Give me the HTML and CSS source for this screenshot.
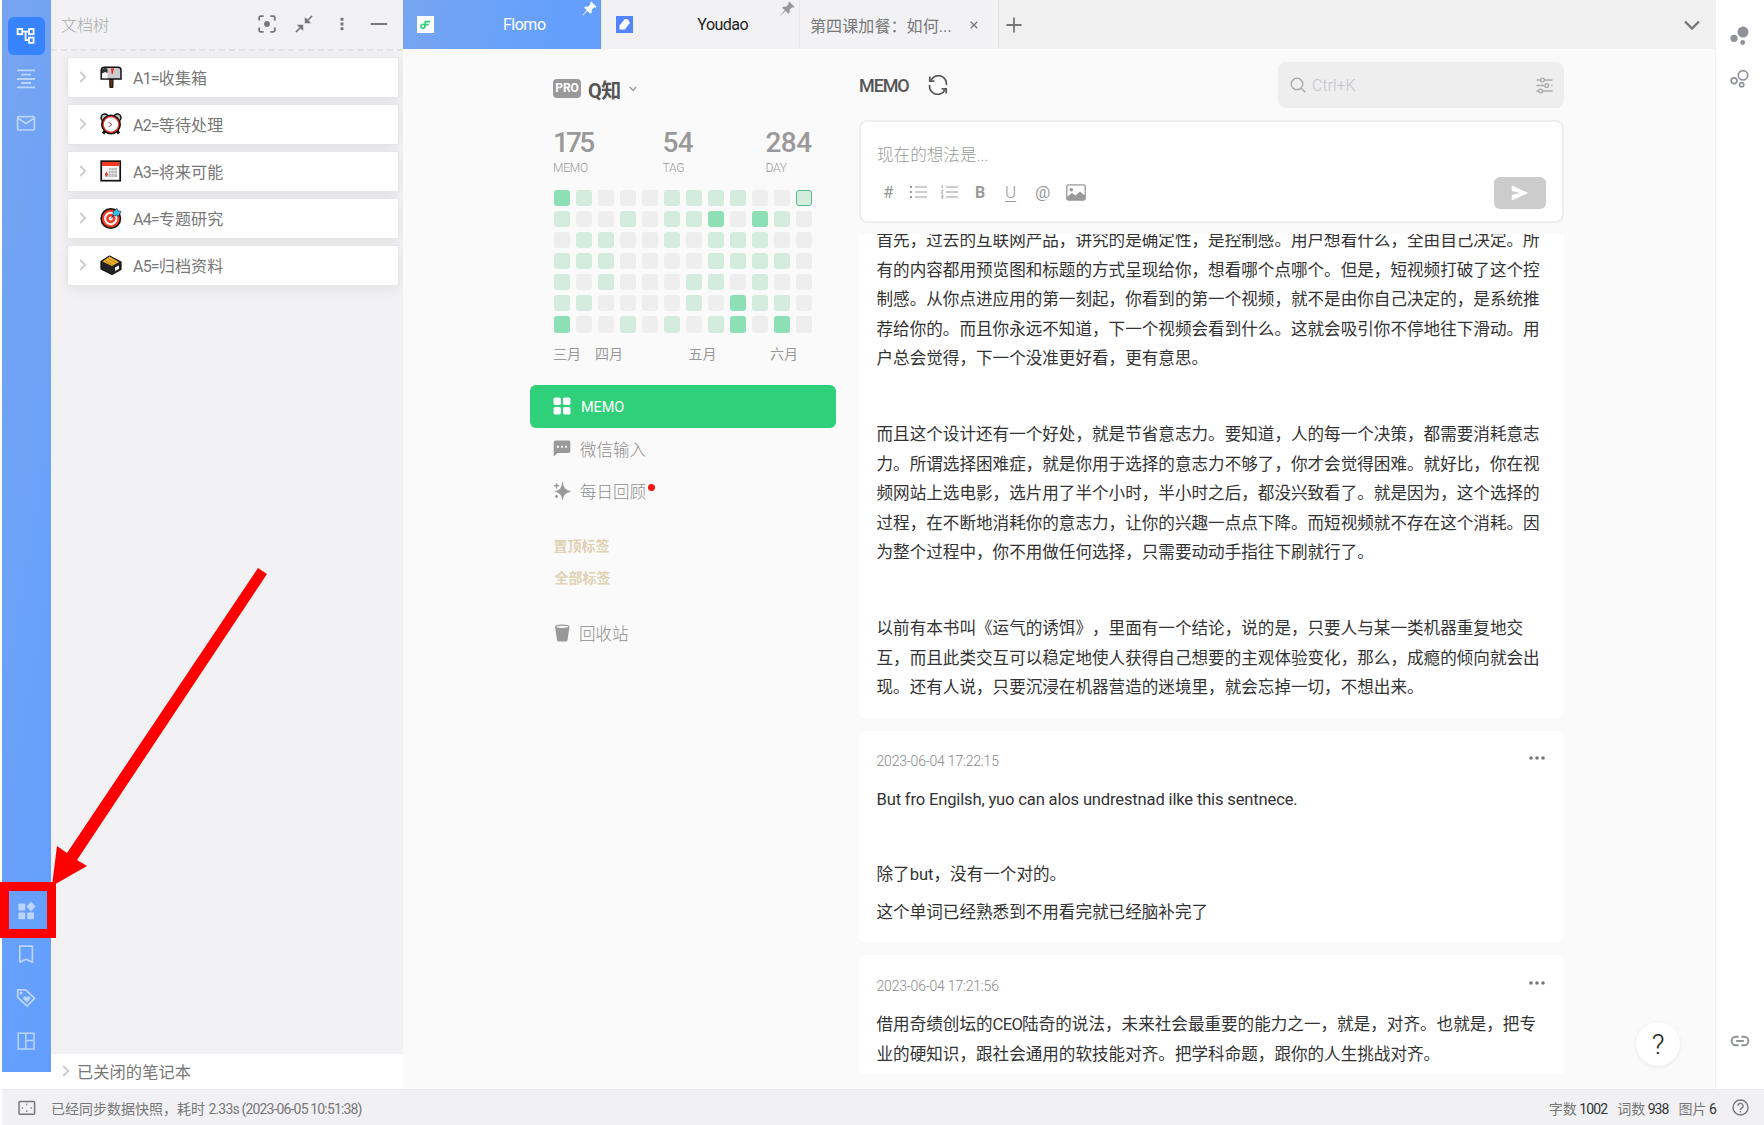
FILE: index.html
```html
<!DOCTYPE html>
<html lang="zh-CN">
<head>
<meta charset="utf-8">
<title>Flomo</title>
<link rel="stylesheet" href="styles.css">
</head>
<body>
<div class="app">
  <div class="workspace">
    <nav class="rail">
      <div class="rail-group">
        <span class="rail-item active"><svg width="20" height="20" viewBox="0 0 20 20" fill="none" stroke="#fff" stroke-width="1.8"><rect x="1.6" y="3" width="4.6" height="5.2"/><rect x="13" y="3" width="4.6" height="5.2"/><rect x="13" y="11.6" width="4.6" height="5.2"/><path d="M6.2 5.6H13M9.6 5.6v8.6H13"/></svg></span>
        <span class="rail-item"><svg width="20" height="20" viewBox="0 0 20 20" stroke="#bcd5ff" stroke-width="1.8"><path d="M1 1.4h18M5 5.6h10M1 10h18M5 14h10M1 18.4h18"/></svg></span>
        <span class="rail-item"><svg width="20" height="20" viewBox="0 0 20 20" fill="none" stroke="#bcd5ff" stroke-width="1.7"><rect x="1.6" y="3.6" width="16.8" height="13.4" rx="1.2"/><path d="M2 5.2l8 5.2 8-5.2"/></svg></span>
      </div>
      <div class="rail-group">
        <span class="rail-item"><svg width="20" height="20" viewBox="0 0 20 20" fill="#bcd5ff"><rect x="2.4" y="2.6" width="6.8" height="6.8" rx="1"/><rect x="2.4" y="11.4" width="6.8" height="6.8" rx="1"/><rect x="11.2" y="11.4" width="6.8" height="6.8" rx="1"/><path d="M15 .8l4.6 4.8L15 10.4 10.4 5.600z"/></svg></span>
        <span class="rail-item"><svg width="20" height="20" viewBox="0 0 20 20" fill="none" stroke="#bcd5ff" stroke-width="1.7"><path d="M3.8 2.2h12.600v16L10 15.200l-6.200 3z" stroke-linejoin="round"/></svg></span>
        <span class="rail-item"><svg width="20" height="20" viewBox="0 0 20 20" fill="none" stroke="#bcd5ff" stroke-width="1.7" stroke-linejoin="round"><path d="M1.600 1.800h8.200L18.600 10.400 11 18.200 1.800 9.400z"/><circle cx="5" cy="5" r=".7" fill="#bcd5ff"/><path fill="#bcd5ff" stroke-width=".5" d="M10.800 14.400L7.600 11c-1-2.200 2-3.400 3.200-1.400 1.200-2 4.200-.8 3.200 1.400z"/></svg></span>
        <span class="rail-item"><svg width="20" height="20" viewBox="0 0 20 20" fill="none" stroke="#bcd5ff" stroke-width="1.500"><rect x="2.200" y="2.200" width="15.800" height="15.800"/><path d="M9.800 2.200v15.800M9.800 9.400h8"/></svg></span>
      </div>
    </nav>

    <aside class="tree">
      <header class="tree-head">
        <span class="tree-title">文档树</span>
        <svg width="18" height="18" viewBox="0 0 18 18" fill="none" stroke="#777" stroke-width="1.8"><path d="M1.200 5.500V2.700q0-1.500 1.500-1.500h3M12.300 1.200h3q1.500 0 1.500 1.500v2.800M16.800 12.500v2.800q0 1.500-1.500 1.500h-3M5.700 16.800h-3q-1.500 0-1.500-1.500v-2.800"/><circle cx="9" cy="9" r="2.900" fill="#777" stroke="none"/></svg>
        <svg width="18" height="18" viewBox="0 0 18 18" fill="#777" stroke="#777" stroke-width="1.700"><path d="M17 1l-5 5M1 17l5-5" /><path stroke="none" d="M9.800 2v6.300h6.400zM8.200 16V9.700H1.800z"/></svg>
        <svg width="18" height="18" viewBox="0 0 18 18" fill="#777"><rect x="7.500" y="2.800" width="3" height="3" rx=".8"/><rect x="7.500" y="7.500" width="3" height="3" rx=".8"/><rect x="7.500" y="12.200" width="3" height="3" rx=".8"/></svg>
        <svg width="18" height="18" viewBox="0 0 18 18"><path d="M.8 9h16.400" stroke="#777" stroke-width="2"/></svg>
      </header>
      <ul class="books">
        <li class="book"><svg class="chev" viewBox="0 0 8 12"><path d="M1.200 1l5 5-5 5"/></svg>
          <svg class="emoji" viewBox="0 0 22 22"><path d="M9.800 13h3.200v8.400h-3.200z" fill="#6b2c16" stroke="#111"/><path d="M4.500 1.200h13.500q3 0 3 3V13H1.200V4.800q0-3.600 3.300-3.600z" fill="#c9cbcc" stroke="#111" stroke-width="1.500"/><path d="M2 6h5.500v6.200H2z" fill="#fff"/><path d="M2 3.500Q4 1 7.500 2.500V7L5 6 2 7.500z" fill="#333"/><path d="M11 2.500h3v2h-1V8h-1.500V4.500H11z" fill="#f02b1b"/></svg>
          <span><span class="key">A1=</span>收集箱</span></li>
        <li class="book"><svg class="chev" viewBox="0 0 8 12"><path d="M1.200 1l5 5-5 5"/></svg>
          <svg class="emoji" viewBox="0 0 22 22"><path d="M5.500 17.500L3 20.500M16.500 17.500l2.500 3" stroke="#111" stroke-width="3"/><circle cx="4.700" cy="4.700" r="3.600" fill="#bfc2c4" stroke="#111" stroke-width="1.500"/><circle cx="17.300" cy="4.700" r="3.600" fill="#bfc2c4" stroke="#111" stroke-width="1.500"/><circle cx="11" cy="11.500" r="9.200" fill="#ef3420" stroke="#111" stroke-width="1.500"/><circle cx="11" cy="11.500" r="7.200" fill="#fff"/><path d="M8.500 9l3.500 2.500-3.500 2.500" fill="none" stroke="#855" stroke-width="1"/></svg>
          <span><span class="key">A2=</span>等待处理</span></li>
        <li class="book"><svg class="chev" viewBox="0 0 8 12"><path d="M1.200 1l5 5-5 5"/></svg>
          <svg class="emoji" viewBox="0 0 22 22"><rect x="1.200" y="1.200" width="19" height="19.500" fill="#f6f6f6" stroke="#111" stroke-width="1.700"/><path d="M2 2h17.400v4H2z" fill="#f23a23"/><path d="M5 13h4V8h8v9H5z" fill="#bbb"/><path d="M5 10.500h12M5 13.500h12M8 8v9M11 8v9M14 8v9" stroke="#eee" stroke-width=".7"/><path d="M6.500 11.500l1.700 3-1.700 2-1.700-2z" fill="#e5442d"/></svg>
          <span><span class="key">A3=</span>将来可能</span></li>
        <li class="book"><svg class="chev" viewBox="0 0 8 12"><path d="M1.200 1l5 5-5 5"/></svg>
          <svg class="emoji" viewBox="0 0 22 22"><circle cx="10.800" cy="11.500" r="9.700" fill="#f03a22" stroke="#111" stroke-width="1.500"/><circle cx="10.800" cy="11.500" r="5.700" fill="none" stroke="#fff" stroke-width="2"/><circle cx="10.800" cy="11.500" r="2" fill="#fff"/><path d="M11 11.500l4-5" stroke="#147" stroke-width="1"/><path d="M13 8.500V5l4-3.500 1 2.500 3 .5-2.500 4.500z" fill="#36bdf0" stroke="#123" stroke-width=".6"/></svg>
          <span><span class="key">A4=</span>专题研究</span></li>
        <li class="book"><svg class="chev" viewBox="0 0 8 12"><path d="M1.200 1l5 5-5 5"/></svg>
          <svg class="emoji" viewBox="0 0 22 22"><path d="M1 7.500L9.500 2 21 8v7.500l-9 5L1 15z" fill="#222" stroke="#111" stroke-width="1.200" stroke-linejoin="round"/><path d="M2.500 7.500L9.500 2.500 19 8l-7 4z" fill="#f3b32b"/><path d="M5 6.500l8 4.500M8 4.500l8 4.500" stroke="#a67c12" stroke-width=".8"/><path d="M15 13.500l4-2v3.500l-4 2z" fill="#fff"/></svg>
          <span><span class="key">A5=</span>归档资料</span></li>
      </ul>
      <footer class="closed"><svg class="chev" viewBox="0 0 8 12"><path d="M1.200 1l5 5-5 5"/></svg><span>已关闭的笔记本</span></footer>
    </aside>

    <section class="center">
      <header class="tabs">
        <div class="tab current">
          <svg class="fav" viewBox="0 0 17 17"><rect width="17" height="17" fill="#fff"/><path d="M7.600 5.600h5.600M8 8.600h3.800" stroke="#2fcf78" stroke-width="1.700"/><circle cx="6" cy="10.200" r="2" fill="none" stroke="#2fcf78" stroke-width="1.600"/><path d="M8.500 5L7.700 10.200" stroke="#2fcf78" stroke-width="1.600"/></svg>
          <span class="tab-name">Flomo</span>
          <svg class="pin" viewBox="0 0 16 16" fill="#fff"><path d="M9.800.5l5.700 5.700-1.300.9-1.200-.3-2.800 2.900.1 2.600-1.500 1.300-3-3L.8 15.500l-.4-.4 4.700-5.200-2.800-2.800 1.500-1.300 2.500.2 2.900-2.800-.4-1.400z"/></svg>
        </div>
        <div class="tab dark">
          <svg class="fav" viewBox="0 0 17 17"><rect width="17" height="17" fill="#5484fb"/><path d="M3.500 9.500L8.800 3h2.700l2.500 3.700-5.200 6.800H3.500z" fill="#fff"/></svg>
          <span class="tab-name">Youdao</span>
          <svg class="pin" viewBox="0 0 16 16" fill="#999"><path d="M9.800.5l5.700 5.700-1.300.9-1.200-.3-2.800 2.900.1 2.600-1.500 1.300-3-3L.8 15.500l-.4-.4 4.700-5.200-2.800-2.800 1.500-1.300 2.500.2 2.900-2.800-.4-1.400z"/></svg>
        </div>
        <div class="tab lesson"><span>第四课加餐：如何...</span><svg width="8" height="8" viewBox="0 0 8 8"><path d="M.7.7l6.600 6.600M7.300.7L.7 7.300" stroke="#777" stroke-width="1.300"/></svg></div>
        <div class="tab-add"><svg width="16" height="16" viewBox="0 0 16 16"><path d="M8 .5v15M.5 8h15" stroke="#777" stroke-width="1.800"/></svg></div>
        <svg class="tabs-more" viewBox="0 0 16 10"><path d="M1 1.500l7 7 7-7" fill="none" stroke="#777" stroke-width="2.400"/></svg>
      </header>

      <div class="flomo">
        <div class="side">
          <div class="user"><span class="pro">PRO</span><b>Q知</b><svg width="8" height="6" viewBox="0 0 8 6"><path d="M.8 1l3.200 3.500L7.200 1" fill="none" stroke="#999" stroke-width="1.200"/></svg></div>
          <div class="stats">
            <div class="stat"><b class="memo-total">175</b><span>MEMO</span></div>
            <div class="stat"><b>54</b><span>TAG</span></div>
            <div class="stat"><b>284</b><span>DAY</span></div>
          </div>
          <div class="heat">
            <i class="h"></i><i class="l"></i><i></i><i></i><i></i><i class="l"></i><i class="l"></i><i class="l"></i><i class="l"></i><i></i><i></i><i class="l today"></i>
            <i class="l"></i><i></i><i></i><i class="l"></i><i></i><i class="l"></i><i class="l"></i><i class="h"></i><i></i><i class="h"></i><i class="l"></i><i></i>
            <i></i><i class="l"></i><i class="l"></i><i></i><i></i><i class="l"></i><i></i><i class="l"></i><i class="l"></i><i class="l"></i><i></i><i></i>
            <i class="l"></i><i class="l"></i><i class="l"></i><i></i><i></i><i></i><i></i><i class="l"></i><i class="l"></i><i class="l"></i><i class="l"></i><i></i>
            <i class="l"></i><i></i><i class="l"></i><i></i><i></i><i></i><i class="l"></i><i class="l"></i><i></i><i class="l"></i><i></i><i></i>
            <i class="l"></i><i class="l"></i><i></i><i></i><i></i><i></i><i class="l"></i><i></i><i class="h"></i><i class="l"></i><i class="l"></i><i></i>
            <i class="h"></i><i></i><i></i><i class="l"></i><i></i><i class="l"></i><i></i><i class="l"></i><i class="h"></i><i></i><i class="h"></i><i></i>
          </div>
          <div class="months"><span>三月</span><span>四月</span><span>五月</span><span>六月</span></div>
          <div class="menu">
            <div class="menu-item on"><svg width="18" height="18" viewBox="0 0 18 18" fill="#fff"><rect x=".5" y=".5" width="7.500" height="7.500" rx="1.800"/><rect x="10" y=".5" width="7.500" height="7.500" rx="1.800"/><rect x=".5" y="10" width="7.500" height="7.500" rx="1.800"/><rect x="10" y="10" width="7.500" height="7.500" rx="1.800"/></svg><span class="caps">MEMO</span></div>
            <div class="menu-item"><svg width="18" height="18" viewBox="0 0 18 18"><path d="M2.500.5h13q1.800 0 1.800 1.800v9q0 1.800-1.800 1.800H4.500L.7 16.500V2.300Q.7.500 2.500.5z" fill="#999"/><path d="M4 5.800h2v2H4zM8 5.800h2v2H8zM12 5.800h2v2h-2z" fill="#fafafa"/></svg><span>微信输入</span></div>
            <div class="menu-item"><svg width="18" height="18" viewBox="0 0 18 18" fill="#999"><path d="M9.500.5Q10 8 17.500 9.500 10 11 9.500 17.500 9 11 2.500 9.500 9 8 9.500.5z" stroke="#999" stroke-width=".8"/><path d="M3.500 1l.7 2.100 2.100.7-2.100.7-.7 2.100-.7-2.100L.7 3.800l2.100-.7z" stroke="#999" stroke-width=".5"/><circle cx="3.500" cy="14.500" r="1.400"/></svg><span>每日回顾</span><em class="dot"></em></div>
          </div>
          <div class="tag">置顶标签</div>
          <div class="tag all">全部标签</div>
          <div class="menu-item trash"><svg width="18" height="18" viewBox="0 0 18 18"><path d="M2 2.500h14.500L14.500 16q-.2 1.500-1.700 1.500H5.700Q4.200 17.500 4 16z" fill="#999"/><ellipse cx="9.200" cy="2.800" rx="6.600" ry="1.700" fill="#fafafa" stroke="#999" stroke-width="1.200"/></svg><span>回收站</span></div>
        </div>

        <div class="main">
          <div class="main-head">
            <b>MEMO</b>
            <svg width="20" height="20" viewBox="0 0 20 20" fill="none" stroke="#555" stroke-width="1.700"><path d="M3.200 5.200A8 8 0 0 1 18.300 10M16.800 14.800A8 8 0 0 1 1.700 10"/><path d="M1.800 1.600v4.600h4.600M18.200 18.400v-4.600h-4.600"/></svg>
            <div class="search">
              <svg width="16" height="16" viewBox="0 0 16 16" fill="none" stroke="#aaa" stroke-width="1.400"><circle cx="7" cy="7" r="5.800"/><path d="M11.200 11.200l4 4"/></svg>
              <span>Ctrl+K</span>
              <svg width="17" height="17" viewBox="0 0 17 17" fill="none" stroke="#aaa" stroke-width="1.400"><path d="M.5 3h4M8.500 3H16.500M.5 8.500h8M15.200 8.500h1.300M.5 14h1.700M7 14h9.500"/><circle cx="6.500" cy="3" r="1.900"/><circle cx="10.800" cy="8.500" r="1.900"/><circle cx="4.500" cy="14" r="1.900"/></svg>
            </div>
          </div>
          <div class="editor">
            <div class="placeholder">现在的想法是...</div>
            <div class="tools">
              <span class="hash">#</span>
              <svg width="17" height="14" viewBox="0 0 17 14" stroke="#999"><path d="M5 2h12M5 7h12M5 12h12" stroke-width="1.200"/><path d="M0 2h2M0 7h2M0 12h2" stroke-width="2"/></svg>
              <svg width="17" height="14" viewBox="0 0 17 14" stroke="#999" fill="none"><path d="M5 2h12M5 7h12M5 12h12" stroke-width="1.200"/><path d="M.3.800h1v3M.3 5.500h1.500l-1.300 2.800h1.500M.3 10h1.500v3.300H.3M.3 11.700h1.500" stroke-width=".8"/></svg>
              <b class="bold">B</b>
              <span class="ul">U</span>
              <span class="at">@</span>
              <svg width="20" height="17" viewBox="0 0 20 17"><rect x=".8" y=".8" width="18.400" height="15.400" rx="1.500" fill="none" stroke="#999" stroke-width="1.300"/><circle cx="5.300" cy="5.700" r="1.800" fill="#999"/><path d="M1 13l5-4 3.500 2.500L14 7.500l5 4V16H1z" fill="#999"/></svg>
              <span class="send"><svg width="18" height="16" viewBox="0 0 18 16" fill="#fff"><path d="M.8.500L17.500 8 .8 15.500V10L9 8 .8 6z"/></svg></span>
            </div>
          </div>
          <div class="feed">
            <article class="card first">
              <p>首先，过去的互联网产品，讲究的是确定性，是控制感。用户想看什么，全由自己决定。所<br>有的内容都用预览图和标题的方式呈现给你，想看哪个点哪个。但是，短视频打破了这个控<br>制感。从你点进应用的第一刻起，你看到的第一个视频，就不是由你自己决定的，是系统推<br>荐给你的。而且你永远不知道，下一个视频会看到什么。这就会吸引你不停地往下滑动。用<br>户总会觉得，下一个没准更好看，更有意思。</p>
              <p>而且这个设计还有一个好处，就是节省意志力。要知道，人的每一个决策，都需要消耗意志<br>力。所谓选择困难症，就是你用于选择的意志力不够了，你才会觉得困难。就好比，你在视<br>频网站上选电影，选片用了半个小时，半小时之后，都没兴致看了。就是因为，这个选择的<br>过程，在不断地消耗你的意志力，让你的兴趣一点点下降。而短视频就不存在这个消耗。因<br>为整个过程中，你不用做任何选择，只需要动动手指往下刷就行了。</p>
              <p>以前有本书叫《运气的诱饵》，里面有一个结论，说的是，只要人与某一类机器重复地交<br>互，而且此类交互可以稳定地使人获得自己想要的主观体验变化，那么，成瘾的倾向就会出<br>现。还有人说，只要沉浸在机器营造的迷境里，就会忘掉一切，不想出来。</p>
            </article>
            <article class="card second">
              <div class="meta"><time>2023-06-04 17:22:15</time><svg width="16" height="4" viewBox="0 0 16 4" fill="#777"><circle cx="2" cy="2" r="1.800"/><circle cx="8" cy="2" r="1.800"/><circle cx="14" cy="2" r="1.800"/></svg></div>
              <p class="latin">But fro Engilsh, yuo can alos undrestnad ilke this sentnece.</p>
              <p class="gap">除了but，没有一个对的。</p>
              <p class="next">这个单词已经熟悉到不用看完就已经脑补完了</p>
            </article>
            <article class="card third">
              <div class="meta"><time>2023-06-04 17:21:56</time><svg width="16" height="4" viewBox="0 0 16 4" fill="#777"><circle cx="2" cy="2" r="1.800"/><circle cx="8" cy="2" r="1.800"/><circle cx="14" cy="2" r="1.800"/></svg></div>
              <p>借用奇绩创坛的<span class="ceo">CEO</span>陆奇的说法，未来社会最重要的能力之一，就是，对齐。也就是，把专<br>业的硬知识，跟社会通用的软技能对齐。把学科命题，跟你的人生挑战对齐。</p>
            </article>
          </div>
        </div>
        <div class="help">?</div>
      </div>
    </section>

    <nav class="dock">
      <svg width="20" height="20" viewBox="0 0 20 20" fill="#8f9299"><circle cx="13" cy="6" r="5.500"/><circle cx="4" cy="12.300" r="3.600"/><circle cx="12.700" cy="16.500" r="2.400"/></svg>
      <svg width="20" height="20" viewBox="0 0 20 20" fill="none" stroke="#8f9299" stroke-width="1.700"><circle cx="13" cy="6.300" r="4.700"/><circle cx="4" cy="11.800" r="2.900"/><circle cx="11.700" cy="15.800" r="2.100"/></svg>
      <svg class="link" width="20" height="20" viewBox="0 0 20 20" fill="none" stroke="#8f9299" stroke-width="1.900"><path d="M8.600 5.800H5.800a4.200 4.200 0 0 0 0 8.400h2.800M11.400 5.800h2.800a4.200 4.200 0 0 1 0 8.400h-2.800M6.200 10h7.600"/></svg>
    </nav>
  </div>

  <footer class="status">
    <svg width="18" height="16" viewBox="0 0 18 16" fill="none" stroke="#777" stroke-width="1.500"><rect x="1" y="1.500" width="15.600" height="12.800" rx="1"/><path d="M8.200 4.600h1.200M8.200 11.200h1.200M3.800 7.900h1.200M12.600 7.900h1.200"/></svg>
    <span class="sync">已经同步数据快照，耗时 <span class="sync-num">2.33s (2023-06-05 10:51:38)</span></span>
    <span class="count">字数 <b>1002</b></span><span class="count">词数 <b>938</b></span><span class="count">图片 <b>6</b></span>
    <svg class="q" width="17" height="17" viewBox="0 0 17 17" fill="none" stroke="#777" stroke-width="1.400"><circle cx="8.500" cy="8.500" r="7.500"/><path d="M6 6.800a2.500 2.500 0 1 1 3.600 2.300q-1.100.6-1.100 1.800M8.500 12v1.500"/></svg>
  </footer>
</div>

<div class="marker"></div>
<svg class="arrow" width="230" height="330" viewBox="0 0 230 330" fill="#f00"><path d="M0 325L5 285 15 292 206 7 215 13 25 299 35 305z"/></svg>
</body>
</html>
```

FILE: styles.css
```css
* { box-sizing: border-box; }
body {
  margin: 0;
  width: 1764px;
  height: 1125px;
  overflow: hidden;
  position: relative;
  background: #fff;
  font-family: Roboto, "Noto Sans CJK SC", sans-serif;
  font-size: 16px;
  color: #777;
  white-space: nowrap;
  text-spacing-trim: space-all;
}
svg { display: block; flex: none; }
p, ul { margin: 0; padding: 0; }
i, em { font-style: normal; }

.app { height: 1125px; padding-left: 2px; display: flex; flex-direction: column; }
.workspace { height: 1089px; display: flex; }

.rail {
  width: 49px;
  height: 1072px;
  padding: 17px 1px 12px 0;
  background: linear-gradient(100deg, #76a5f0, #649ffe 90%);
  display: flex;
  flex-direction: column;
  justify-content: space-between;
  align-items: center;
}
.rail-group { display: flex; flex-direction: column; gap: 6px; }
.rail-item { width: 37px; height: 37.500px; border-radius: 6px; display: flex; align-items: center; justify-content: center; }
.rail-item.active { background: #3884ff; }

.tree { width: 352px; background: #f2f2f5; display: flex; flex-direction: column; }
.tree-head { height: 51px; padding: 0 15px 2px 10px; border-bottom: 2px dashed #e3e3e6; display: flex; align-items: center; gap: 19.500px; }
.tree-title { flex: 1; color: #aaa; font-weight: 300; }
.books { list-style: none; padding: 6px 4px 0 16px; display: flex; flex-direction: column; gap: 6px; flex: 1; }
.book {
  height: 41px;
  padding: 0 0 1px 11px;
  background: #fff;
  border: 1px solid #e6e6e9;
  border-radius: 2px;
  box-shadow: 0 3px 14px rgba(0, 0, 0, .07);
  display: flex;
  align-items: center;
  color: #777;
}
.book > span { letter-spacing: .15px; }
.book .key { letter-spacing: -.8px; }
.chev { width: 8px; height: 12px; fill: none; stroke: #ccc; stroke-width: 1.800; }
.emoji { width: 22px; height: 22px; margin: 0 11px 0 13px; }
.closed { height: 35px; padding: 0 0 2px 11px; background: #fff; display: flex; align-items: center; gap: 7px; font-size: 16.300px; }

.center { width: 1313px; background: #fafafa; display: flex; flex-direction: column; border-right: 1px solid #f1f1f1; }
.tabs { height: 49px; background: #f0f0f0; display: flex; align-items: center; }
.tab { position: relative; width: 198.500px; height: 49px; padding: 0 14px; background: #f2f2f5; border-right: 1px solid #e7e7ea; display: flex; align-items: center; }
.tab.current { background: linear-gradient(100deg, #76a5f0, #649ffe 80%); color: #fff; }
.tab.dark { color: #222; }
.fav { width: 17px; height: 17px; }
.tab-name { flex: 1; text-align: center; padding-left: 28px; letter-spacing: -.5px; }
.pin { position: absolute; right: 4px; top: 1px; width: 15px; height: 15px; }
.tab.lesson { padding: 0 20px 0 10px; justify-content: space-between; letter-spacing: .1px; }
.tab-add { padding-left: 7px; }
.tabs-more { width: 16px; height: 10px; margin-left: auto; margin-right: 15px; }

.flomo { position: relative; flex: 1; display: flex; padding-left: 127px; }
.side { width: 306px; padding-top: 27px; color: #999; }
.user { height: 26px; padding-left: 23px; display: flex; align-items: center; }
.pro { width: 28px; height: 19px; margin-bottom: 1px; border-radius: 4px; background: #999; color: #fff; font: 700 12px/19px Roboto, sans-serif; text-align: center; }
.user b { margin: 0 8px 0 7px; font-size: 20px; letter-spacing: -.5px; color: #555; }
.stats { margin-top: 24.500px; padding-left: 23px; display: grid; grid-template-columns: 109.500px 103px auto; }
.stat b { display: block; font-size: 28px; line-height: 32px; font-weight: 500; letter-spacing: -.6px; }
.stat .memo-total { letter-spacing: -2.800px; }
.stat span { display: block; font-size: 12px; line-height: 16px; margin-top: 1px; font-weight: 300; letter-spacing: -.2px; }
.heat { margin: 14px 0 0 23.500px; display: grid; grid-template-columns: repeat(12, 16.500px); grid-auto-rows: 16.500px; column-gap: 5.500px; row-gap: 4.600px; }
.heat i { background: #eee; border-radius: 3px; }
.heat i.l { background: #d3ecde; }
.heat i.h { background: #8ddfb5; }
.heat i.today { border: 1px solid #57bd8c; }
.months { margin: 10px 0 0 23px; height: 22px; line-height: 22px; font-size: 14px; display: grid; grid-template-columns: 42px 93.500px 81.500px auto; }
.menu { margin-top: 20px; }
.menu-item { height: 42.300px; padding-left: 23px; display: flex; align-items: center; gap: 9px; font-size: 16.500px; font-weight: 300; color: #8d8d8d; }
.menu-item.on { width: 305.500px; height: 43px; background: #30cf79; color: #fff; border-radius: 6px; font-weight: 400; }
.caps { letter-spacing: -.1px; font-size: 14.500px; padding: 2px 0 0 1px; }
.dot { width: 7px; height: 7px; border-radius: 50%; background: #f11; margin: -8px 0 0 -7px; }
.tag { margin: 23px 0 0 23.500px; height: 22px; line-height: 22px; font-size: 14px; font-weight: 700; color: #e0d1b4; }
.tag.all { margin: 9.500px 0 0 24.500px; }
.trash { margin-top: 23px; gap: 8px; }

.main { width: 705px; margin-left: 23px; padding-top: 13px; }
.main-head { height: 46px; display: flex; align-items: center; color: #555; }
.main-head b { font-size: 18px; font-weight: 500; letter-spacing: -1.100px; width: 69px; }
.search { width: 286px; height: 46px; margin-left: auto; padding: 0 11px 0 12px; background: #eee; border-radius: 8px; display: flex; align-items: center; gap: 6px; color: #bfc3ca; }
.search span { flex: 1; font-weight: 300; padding-top: 1px; }
.editor { height: 103px; margin-top: 12px; padding: 20px 16px 0; background: #fff; border: 2px solid #eee; border-radius: 8px; }
.placeholder { height: 28px; line-height: 28px; font-size: 16.600px; font-weight: 300; color: #999; }
.tools { height: 36px; margin-top: 4px; padding-left: 6px; display: flex; align-items: center; color: #999; }
.tools > * { margin-right: 14px; }
.tools .hash { width: 14px; margin-right: 13px; font-size: 17px; }
.tools .bold { width: 16px; margin-left: 3px; }
.tools .ul { width: 16px; font-size: 17px; text-decoration: underline; text-underline-offset: 3px; font-weight: 300; }
.tools .at { width: 18px; margin-right: 13px; font-size: 17px; }
.tools .send { width: 52px; height: 32px; margin: 1px 0 0 auto; border-radius: 6px; background: #ccc; display: flex; align-items: center; justify-content: center; }

.feed { height: 840px; margin-top: 11px; overflow: hidden; color: #333; font-size: 16.580px; line-height: 29.500px; }
.card { background: #fff; border-radius: 6px; padding: 0 18px 0 17.500px; }
.card.first { height: 484px; border-radius: 0 0 6px 6px; margin-bottom: 12.500px; overflow: hidden; }
.card.first p { margin-bottom: 46.500px; }
.card.first p:first-child { margin-top: -8px; }
.card.second { height: 212.500px; margin-bottom: 12px; }
.card.third { height: 140px; }
.meta { height: 54.500px; padding-top: 7px; display: flex; justify-content: space-between; align-items: center; }
.meta svg { margin: -7px 1px 0 0; }
.meta time { font-size: 14px; font-weight: 300; letter-spacing: -.2px; color: #888; }
.latin { letter-spacing: -.170px; }
.ceo { letter-spacing: -.7px; }
.card.second .gap { margin-top: 45.500px; }
.card.second .next { margin-top: 8.500px; }
.card.third .meta { height: 55px; padding-top: 8px; }

.help { position: absolute; left: 1233px; top: 973px; width: 44px; height: 44px; border-radius: 50%; background: #fff; box-shadow: 0 1px 4px rgba(0, 0, 0, .08); color: #222; font-size: 28px; font-weight: 300; line-height: 46px; text-align: center; }

.dock { flex: 1; padding: 26px 0 38px; display: flex; flex-direction: column; align-items: center; gap: 23px; }
.dock .link { margin-top: auto; }

.status { height: 36px; padding: 0 15px 0 16px; background: #f1f1f4; border-top: 1px solid #e9e9ec; display: flex; align-items: center; font-size: 14px; color: #777; }
.sync { flex: 1; margin-left: 15px; }
.sync-num { letter-spacing: -.840px; }
.count { margin-right: 10px; word-spacing: -1px; }
.count b { color: #333; font-weight: 400; letter-spacing: -.900px; }
.q { margin-left: 6px; }

.marker { position: absolute; left: 0; top: 882px; width: 56px; height: 56px; border: 9px solid #f00; }
.arrow { position: absolute; left: 52px; top: 561px; }
```
